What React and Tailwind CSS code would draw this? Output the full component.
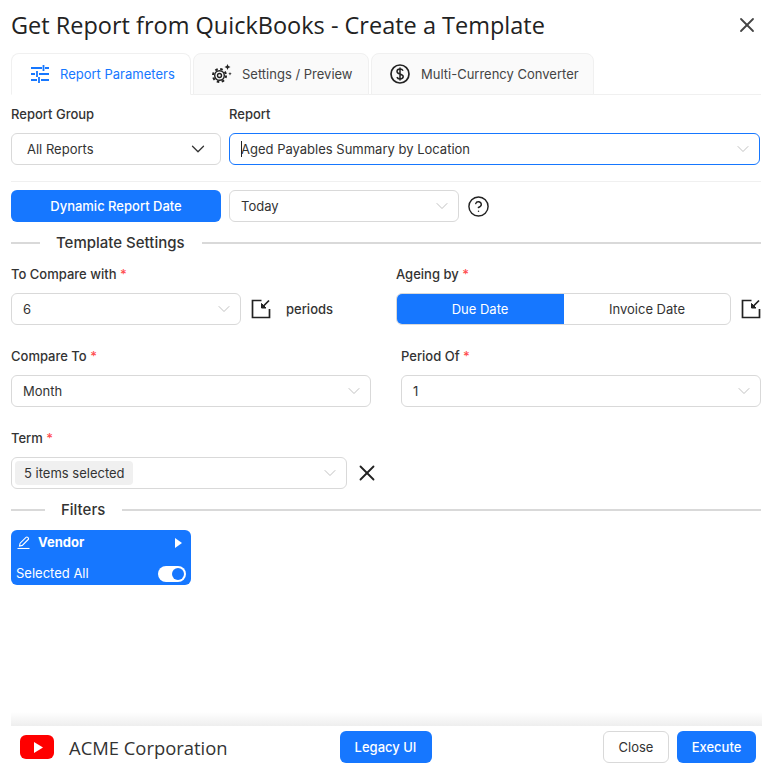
import { ChevronDown, X, CircleHelp } from 'lucide-react';

const Req = () => <span className="text-[#ff4d4f]"> *</span>;

function Label({ children, required, className = '' }) {
  return (
    <div className={`h-[19px] text-[13px] leading-[19px] font-medium text-[#333] ${className}`}>
      {children}
      {required && <Req />}
    </div>
  );
}

function Select({ value, className = '', focused, dark }) {
  return (
    <div className={`h-8 flex items-center justify-between bg-white rounded-md border pl-[11px] text-[13px] text-[#333] ${focused ? 'border-[#1677ff]' : 'border-[#d9d9d9]'} ${dark ? 'pr-[11px]' : 'pr-[6px]'} ${className}`}>
      <span className="pt-px">{value}</span>
      {dark
        ? <ChevronDown size={22} strokeWidth={1.4} className="text-[#333]" />
        : <ChevronDown size={20} strokeWidth={1.1} className="text-[#bbb]" />}
    </div>
  );
}

function Divider({ title, left, className = '' }) {
  return (
    <div className={`flex items-center ${className}`}>
      <div className={`h-0.5 bg-[#d9d9d9] ${left}`} />
      <span className="pl-4 pr-[17px] text-[15px] font-medium text-[#333]">{title}</span>
      <div className="h-0.5 flex-1 bg-[#d9d9d9]" />
    </div>
  );
}

function ResizeIcon() {
  return (
    <svg width="20" height="20" viewBox="0 0 20 20" fill="none" stroke="#222" strokeWidth="1.7">
      <path d="M10.5 1.5H1.5v17h17v-8.5" />
      <path d="M18 1.5L11.5 8" />
      <path d="M10.5 4.5v4.5h4.5z" fill="#222" strokeWidth="1" />
    </svg>
  );
}

function GearIcon() {
  return (
    <svg width="20" height="20" viewBox="0 0 20 20" fill="none" stroke="#222">
      <circle cx="7.5" cy="11.5" r="2" strokeWidth="1.4" />
      <circle cx="7.5" cy="11.5" r="4.8" strokeWidth="1.4" />
      <circle cx="7.5" cy="11.5" r="6.5" strokeWidth="2" strokeDasharray="2.55 2.55" />
      <path d="M15.5 0l.9 2.1 2.1.9-2.1.9-.9 2.1-.9-2.1-2.1-.9 2.1-.9z" fill="#222" stroke="none" />
      <path d="M18 8l.5 1.2 1.2.5-1.2.5-.5 1.2-.5-1.2-1.2-.5 1.2-.5z" fill="#222" stroke="none" />
    </svg>
  );
}

function SlidersIcon() {
  return (
    <svg width="18" height="18" viewBox="0 0 18 18" fill="none" stroke="#1677ff" strokeWidth="1.8">
      <path d="M0 3h11M14 3h4M12.5 0v6M0 9h4M8 9h10M6 6v6M0 15h6M10 15h8M8 12v6" />
    </svg>
  );
}

function DollarIcon() {
  return (
    <svg width="20" height="20" viewBox="0 0 20 20" fill="none" stroke="#222">
      <circle cx="10" cy="10" r="9" strokeWidth="1.7" />
      <path d="M13 6.8C12.5 5.6 11.3 5 10 5 8.2 5 7 6 7 7.4c0 3.2 6.2 1.9 6.2 5.2 0 1.4-1.3 2.4-3.2 2.4-1.4 0-2.6-.7-3.1-1.9M10 3.4v13.2" strokeWidth="1.5" />
    </svg>
  );
}

function Tab({ icon, label, active, className = '' }) {
  return (
    <div className={`h-[42px] flex items-center rounded-t-lg border border-[#f0f0f0] text-[13px] ${active ? 'bg-white border-b-white text-[#1677ff] relative z-10' : 'bg-[#fafafa] text-[#444]'} ${className}`}>
      {icon}
      <span className="pt-px">{label}</span>
    </div>
  );
}

export default function App() {
  return (
    <div className="w-[783px] h-[781px] flex flex-col bg-white font-['Inter',sans-serif] overflow-hidden">
      <div className="flex items-center justify-between pl-[11px] pr-[24px] pt-[10px] h-[53px] pb-[13px]">
        <h1 className="text-[23.5px] leading-[30px] text-[#222] font-['Open_Sans',sans-serif]">Get Report from QuickBooks - Create a Template</h1>
        <X size={24} strokeWidth={1.8} className="text-[#444]" />
      </div>

      <div className="px-[11px]">
        <div className="flex gap-[2px] border-b border-[#f0f0f0] h-[42px] w-[750px]">
          <Tab active icon={<SlidersIcon />} label="Report Parameters" className="w-[180px] pl-[19px] gap-[11px]" />
          <Tab icon={<GearIcon />} label="Settings / Preview" className="w-[176px] pl-[18px] gap-[10px]" />
          <Tab icon={<DollarIcon />} label="Multi-Currency Converter" className="w-[223px] pl-[18px] gap-[11px]" />
        </div>

        <div className="w-[750px]">
          <div className="flex gap-2 mt-[10px]">
            <div className="w-[210px]">
              <Label>Report Group</Label>
              <Select value="All Reports" dark className="mt-[9px] pl-[15px]" />
            </div>
            <div className="w-[531px]">
              <Label>Report</Label>
              <div className="mt-[9px] relative">
                <Select value="Aged Payables Summary by Location" focused />
                <div className="absolute left-3 top-2 h-4 w-px bg-[#222]" />
              </div>
            </div>
          </div>

          <div className="h-px bg-[#f0f0f0] mt-4" />

          <div className="flex items-center mt-2">
            <button className="w-[210px] h-8 pt-px rounded-md bg-[#1677ff] text-white text-[13px] font-medium">Dynamic Report Date</button>
            <Select value="Today" className="w-[230px] ml-2" />
            <CircleHelp size={23} strokeWidth={1.5} className="ml-[8px] text-[#222]" />
          </div>

          <Divider title="Template Settings" left="w-[29px]" className="mt-[10px] h-[22px]" />

          <div className="flex mt-[11px]">
            <div className="w-[385px]">
              <Label required>To Compare with</Label>
              <div className="flex items-center mt-[9px]">
                <Select value="6" className="w-[230px]" />
                <div className="ml-[10px]"><ResizeIcon /></div>
                <span className="ml-[15px] pt-px text-[13px] font-medium text-[#333]">periods</span>
              </div>
            </div>
            <div className="w-[365px]">
              <Label required>Ageing by</Label>
              <div className="flex items-center mt-[9px]">
                <div className="w-[336px] h-8 flex rounded-md overflow-hidden border border-[#d9d9d9] text-[13px]">
                  <div className="w-[168px] -my-px -ml-px pt-px flex items-center justify-center bg-[#1677ff] text-white">Due Date</div>
                  <div className="flex-1 pt-px flex items-center justify-center text-[#333]">Invoice Date</div>
                </div>
                <div className="ml-[10px]"><ResizeIcon /></div>
              </div>
            </div>
          </div>

          <div className="flex mt-[22px]">
            <div className="w-[360px]">
              <Label required>Compare To</Label>
              <Select value="Month" className="mt-[9px]" />
            </div>
            <div className="w-[360px] ml-[30px]">
              <Label required>Period Of</Label>
              <Select value="1" className="mt-[9px]" />
            </div>
          </div>

          <div className="mt-[22px]">
            <Label required>Term</Label>
            <div className="flex items-center mt-[9px]">
              <div className="w-[336px] h-8 flex items-center justify-between rounded-md border border-[#d9d9d9] pl-[3px] pr-[6px]">
                <span className="h-6 flex items-center pl-[9px] pr-2 pt-px rounded bg-[#f0f0f0] text-[13px] text-[#333]">5 items selected</span>
                <ChevronDown size={20} strokeWidth={1.1} className="text-[#bbb]" />
              </div>
              <X size={26} strokeWidth={1.7} className="ml-[7px] text-[#222]" />
            </div>
          </div>

          <Divider title="Filters" left="w-[34px]" className="mt-[10px] h-[22px]" />

          <div className="w-[180px] h-[55px] mt-[9px] rounded-md bg-[#1677ff] text-white text-[13px] px-[5px]">
            <div className="flex items-center h-[25px]">
              <svg width="13" height="13" viewBox="0 0 13 13" fill="none" stroke="#fff" strokeWidth="1.1" className="ml-px">
                <path d="M0.5 12.5h12" />
                <path d="M2.5 10l.6-2.8L9 1.3a1.2 1.2 0 0 1 1.7 0l.5.5a1.2 1.2 0 0 1 0 1.7L5.3 9.4z" />
              </svg>
              <span className="ml-2 pt-px font-bold">Vendor</span>
              <svg width="7" height="10" viewBox="0 0 7 10" className="ml-auto mr-[4px]"><path d="M0 0l7 5-7 5z" fill="#fff" /></svg>
            </div>
            <div className="flex items-center justify-between mt-[9px]">
              <span>Selected All</span>
              <div className="w-7 h-4 rounded-full bg-white flex items-center justify-end pr-[2px]">
                <div className="w-3 h-3 rounded-full bg-[#1677ff]" />
              </div>
            </div>
          </div>
        </div>
      </div>

      <div className="mt-auto ml-[11px] w-[751px] h-[14px] bg-linear-to-t from-[#eeeeee] to-white" />
      <div className="mb-[18px] ml-[11px] w-[751px] h-[37px] pt-[5px] flex items-center pl-[9px] pr-[6px]">
        <svg width="34" height="24" viewBox="0 0 34 24">
          <rect width="34" height="24" rx="6" fill="#ff0000" />
          <path d="M14 7l9 5.5-9 5.5z" fill="#fff" />
        </svg>
        <span className="ml-[15px] pt-px text-[18.4px] text-[#333] font-['Open_Sans',sans-serif]">ACME Corporation</span>
        <button className="ml-[112px] w-[92px] h-8 pt-px rounded-md bg-[#1677ff] text-white text-[13px] font-medium">Legacy UI</button>
        <button className="ml-auto w-[66px] h-8 pt-px rounded-md border border-[#d9d9d9] bg-white text-[#333] text-[13px]">Close</button>
        <button className="ml-2 w-[79px] h-8 pt-px rounded-md bg-[#1677ff] text-white text-[13px] font-medium">Execute</button>
      </div>
    </div>
  );
}
